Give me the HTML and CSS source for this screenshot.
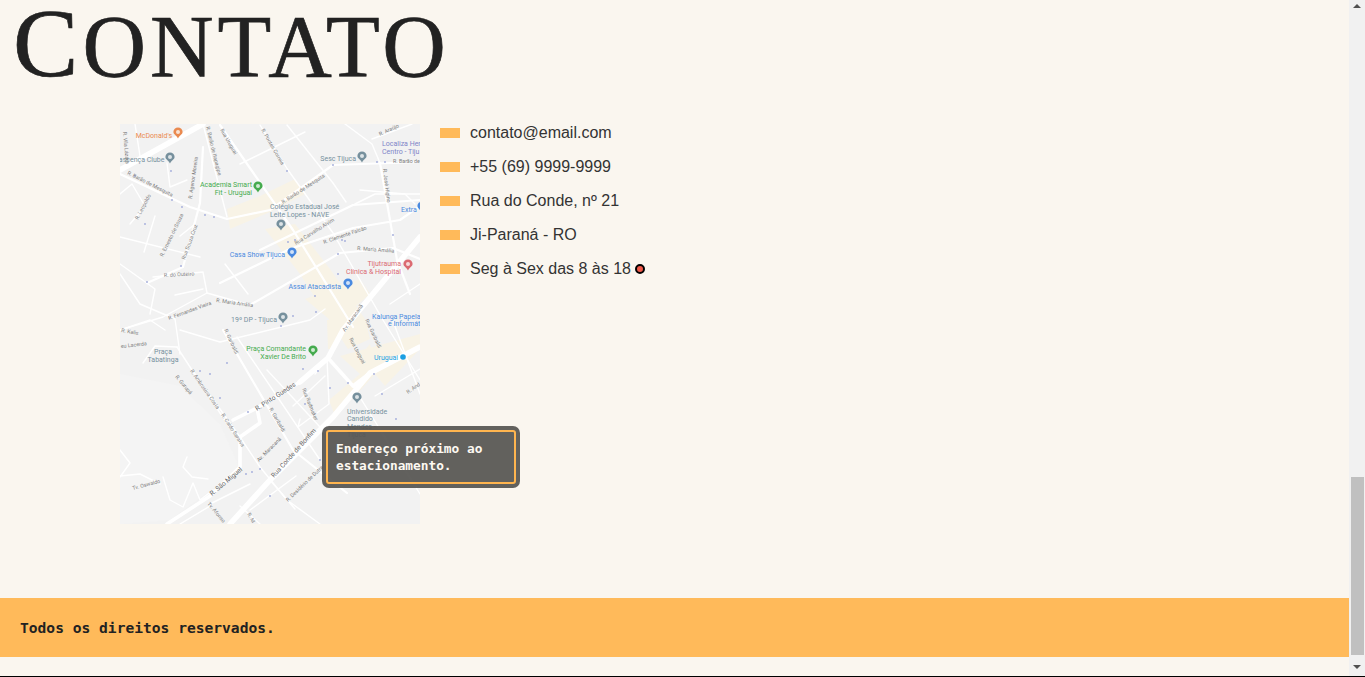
FILE: index.html
```html
<!DOCTYPE html>
<html lang="pt-BR">
<head>
<meta charset="utf-8">
<title>Contato</title>
<link rel="stylesheet" href="styles.css">
</head>
<body>
<div class="window">
  <div class="viewport">
    <div class="page">
      <h1 class="title">Contato</h1>
      <section class="contact">
        <div class="map-wrap">
          <svg class="map" width="300" height="400" viewBox="0 0 300 400" xmlns="http://www.w3.org/2000/svg">
            <defs>
              <g id="pin"><path d="M0-5.5a4.6 4.6 0 0 1 4.6 4.6C4.6 1.6 1.3 2.6 0 5.5-1.3 2.6-4.6 1.6-4.6-.9A4.6 4.6 0 0 1 0-5.5z"/><circle cy="-1" r="2" class="pin-dot"/></g>
            </defs>
            <rect width="300" height="400" class="land"/>
            <path class="hill" d="M0 250 60 262 100 300 120 345 50 396 0 400z"/>
            <path class="beige" d="M107 85 140 72 175 55 185 70 150 88 110 105zM145 105 175 100 210 145 245 195 250 215 228 225 215 205 180 150zM185 175 240 155 250 170 215 200zM207 196H228L215 225 208 225zM220 232 300 210V225L265 262 255 250 235 272 215 292 209 276 240 250zM240 232 250 220 258 250 246 250z"/>
            <g class="r-major">
              <path d="M0 46 83 0"/>
              <path d="M300 113 223 206 208 234 180 258"/>
              <path d="M300 223 250 249 213 293 150 356 110 400"/>
            </g>
            <g class="r-wide">
              <path d="M180 258 137 284 113 296"/>
              <path d="M47 400 90 372 120 343 120 313 140 299 137 284"/>
              <path d="M208 234 233 262 250 249"/>
            </g>
            <g class="r-mid">
              <path d="M0 50 70 83 107 95 150 86 213 41 300 38"/>
              <path d="M100 1 173 106 233 203"/>
              <path d="M140 126 233 81 300 76"/>
              <path d="M100 159 170 125 233 104 280 96 300 82"/>
              <path d="M130 181 220 129 273 124 300 135"/>
              <path d="M83 23 80 79 63 143 27 159"/>
              <path d="M260 39 277 136 290 170"/>
              <path d="M103 206 173 326 227 369"/>
            </g>
            <g class="r-thin">
              <path d="M140 1 168 46 213 109 263 196 300 256"/>
              <path d="M167 1 213 59 226 78"/>
              <path d="M83 0 107 93"/>
              <path d="M0 113 80 133"/>
              <path d="M47 39 50 63 67 56"/>
              <path d="M33 153 83 148 87 169 130 181"/>
              <path d="M0 206 43 193 87 169"/>
              <path d="M55 171 83 165"/>
              <path d="M120 40 185 8"/>
              <path d="M235 80 255 70 300 70"/>
              <path d="M240 66 285 70 295 80"/>
              <path d="M252 15 292 0"/>
              <path d="M225 0 252 20 260 39"/>
              <path d="M72 246 120 313 140 343 167 376 200 400"/>
              <path d="M57 223 100 289 120 319"/>
              <path d="M117 213 200 336"/>
              <path d="M147 246 200 303"/>
              <path d="M60 206 100 218 190 196 205 185"/>
              <path d="M23 239 35 222 57 223"/>
              <path d="M0 206 30 196 45 206"/>
              <path d="M173 282 205 252"/>
              <path d="M195 250 207 234 209 280 178 303 180 295"/>
              <path d="M270 180 300 160"/>
              <path d="M273 197 300 270"/>
              <path d="M255 272 300 245"/>
              <path d="M0 140 35 165 30 190"/>
              <path d="M0 150 20 180 55 195 60 230"/>
              <path d="M233 262 300 370"/>
              <path d="M90 380 130 360"/>
              <path d="M130 386 176 352"/>
              <path d="M0 326 10 339 0 353"/>
              <path d="M43 353 50 376 63 383 73 359 80 376 93 366"/>
              <path d="M67 333 63 343 72 353 88 355"/>
              <path d="M0 352 20 350 40 360"/>
              <path d="M60 400 90 382"/>
              <path d="M150 356 175 385"/>
              <path d="M120 382 140 400"/>
              <path d="M0 70 12 60 25 82 10 100"/>
              <path d="M75 100 60 112"/>
              <path d="M15 0 20 32"/>
              <path d="M35 92 24 128"/>
              <path d="M105 140 128 170"/>
            </g>
            <path class="r-oneway" d="M15 52h0M52 76h0M62 83h0M85 91h0M94 93h0M167 47h0M213 41h0M257 38h0M265 38h0M51 47h0M25 100h0M61 142h0M27 158h0M168 118h0M175 116h0M222 116h0M195 172h0M218 130h0M225 117h0M273 111h0M218 150h0M196 188h0M161 202h0M173 192h0M80 247h0M90 250h0M107 239h0M183 245h0M198 247h0M128 288h0M100 274h0M185 280h0M210 264h0M228 259h0M254 250h0M262 270h0M276 295h0M126 350h0M132 348h0M140 345h0M150 372h0M200 336h0"/>
            <g class="poi">
              <text class="orange" x="52" y="14" text-anchor="end">McDonald's</text>
              <use href="#pin" x="58" y="9" class="orange"/>
              <text class="slate" x="44.5" y="37.5" text-anchor="end">ascença Clube</text>
              <use href="#pin" x="50" y="34" class="slate"/>
              <text class="slate" x="236" y="37" text-anchor="end">Sesc Tijuca</text>
              <use href="#pin" x="242" y="33" class="slate"/>
              <text class="violet" x="262" y="21.5">Localiza Her</text>
              <text class="violet" x="262" y="29.5">Centro - Tiju</text>
              <text class="green" x="132" y="63" text-anchor="end">Academia Smart</text>
              <text class="green" x="132" y="71" text-anchor="end">Fit - Uruguai</text>
              <use href="#pin" x="138" y="63" class="green"/>
              <text class="slate" x="150" y="84.5">Colégio Estadual José</text>
              <text class="slate" x="150" y="92.5">Leite Lopes - NAVE</text>
              <use href="#pin" x="161" y="101" class="slate"/>
              <text class="blue" x="281" y="87.5">Extra</text>
              <use href="#pin" x="302" y="83" class="blue"/>
              <text class="blue" x="165" y="132.5" text-anchor="end">Casa Show Tijuca</text>
              <use href="#pin" x="172" y="129" class="blue"/>
              <text class="rose" x="281" y="141.5" text-anchor="end">Tijutrauma</text>
              <text class="rose" x="281" y="149.5" text-anchor="end">Clínica &amp; Hospital</text>
              <use href="#pin" x="288" y="141" class="rose"/>
              <text class="blue" x="221" y="164.5" text-anchor="end">Assaí Atacadista</text>
              <use href="#pin" x="228" y="160" class="blue"/>
              <text class="slate" x="157" y="197.5" text-anchor="end">19º DP - Tijuca</text>
              <use href="#pin" x="163" y="194" class="slate"/>
              <text class="blue" x="252" y="194.5">Kalunga Papela</text>
              <text class="blue" x="268" y="202">e Informát</text>
              <text class="slate" x="43" y="229.5" text-anchor="middle">Praça</text>
              <text class="slate" x="43" y="237.5" text-anchor="middle">Tabatinga</text>
              <text class="green" x="186" y="226.5" text-anchor="end">Praça Comandante</text>
              <text class="green" x="186" y="234.5" text-anchor="end">Xavier De Brito</text>
              <use href="#pin" x="193" y="227" class="green"/>
              <text class="sky" x="254" y="235.5">Uruguai</text>
              <circle cx="283" cy="233" r="2.8" class="sky"/>
              <use href="#pin" x="237" y="274" class="slate"/>
              <text class="slate" x="227" y="289.5">Universidade</text>
              <text class="slate" x="227" y="297">Candido</text>
              <text class="slate" x="227" y="305">Mendes -</text>
              <text class="slate" x="227" y="313">Tijuca</text>
            </g>
            <g class="street">
              <text transform="translate(7 50) rotate(27)">R. Barão de Mesquita</text>
              <text transform="translate(163 80) rotate(-33)">R. Barão de Mesquita</text>
              <text transform="translate(86 3) rotate(76)">R. Barão de Itapagipe</text>
              <text transform="translate(100 6) rotate(60)">Rua Uruguai</text>
              <text transform="translate(141 6) rotate(60)">R. Pontes Correia</text>
              <text transform="translate(72 75) rotate(-82)">R. Agenor Moreira</text>
              <text transform="translate(3 8) rotate(85)">R. Vila Lázara</text>
              <text transform="translate(18 96) rotate(-62)">R. Leopoldo</text>
              <text transform="translate(43 133) rotate(-64)">R. Ernesto de Souza</text>
              <text transform="translate(65 136) rotate(-70)">Rua Souza Cruz</text>
              <text transform="translate(176 121) rotate(-32)">Rua Carvalho Alvim</text>
              <text transform="translate(204 120) rotate(-19)">R. Clemente Falcão</text>
              <text transform="translate(237 126) rotate(4)">R. Maria Amália</text>
              <text transform="translate(44 153) rotate(-3)">R. do Outeiro</text>
              <text transform="translate(96 178) rotate(8)">R. Maria Amália</text>
              <text transform="translate(49 196) rotate(-20)">R. Fernandes Vieira</text>
              <text transform="translate(273 39)">R. Barão de</text>
              <text transform="translate(263 45) rotate(83)">R. José Higino</text>
              <text transform="translate(260 12) rotate(-25)">R. Araújo</text>
              <text transform="translate(225 208) rotate(-55)">Av. Maracanã</text>
              <text transform="translate(245 196) rotate(65)">Rua Garibaldi</text>
              <text transform="translate(229 215) rotate(62)">Rua Uruguai</text>
              <text transform="translate(104 206) rotate(65)">R. Garibaldi</text>
              <text transform="translate(70 247) rotate(55)">R. Ambrosina Costa</text>
              <text transform="translate(55 253) rotate(50)">R. Gurupá</text>
              <text transform="translate(101 291) rotate(57)">R. Caldo Saraiva</text>
              <text transform="translate(149 285) rotate(60)">R. Garibaldi</text>
              <text transform="translate(182 265) rotate(68)">Rua Radmaker</text>
              <text class="big" transform="translate(137 287) rotate(-33)">R. Pinto Guedes</text>
              <text class="big" transform="translate(154 354) rotate(-48)">Rua Conde de Bonfim</text>
              <text class="big" transform="translate(92 372) rotate(-40)">R. São Miguel</text>
              <text transform="translate(139 338) rotate(-45)">Av. Maracanã</text>
              <text transform="translate(168 378) rotate(-44)">R. Desidério de Dutra</text>
              <text transform="translate(13 366) rotate(-15)">Tv. Oswaldo</text>
              <text transform="translate(87 380) rotate(50)">Tv. Afonso</text>
              <text transform="translate(288 270) rotate(-35)">R. And</text>
              <text transform="translate(1 208) rotate(10)">R. Kalis</text>
              <text transform="translate(1 224) rotate(-6)">eu Lacerda</text>
              <text transform="translate(127 390) rotate(60)">R. M</text>
            </g>
          </svg>
          <div class="tooltip"><p class="tooltip-text">Endereço próximo ao estacionamento.</p></div>
        </div>
        <ul class="info">
          <li class="info-item">contato@email.com</li>
          <li class="info-item">+55 (69) 9999-9999</li>
          <li class="info-item">Rua do Conde, nº 21</li>
          <li class="info-item">Ji-Paraná - RO</li>
          <li class="info-item">Seg à Sex das 8 às 18 <span class="status"></span></li>
        </ul>
      </section>
      <footer class="footer">Todos os direitos reservados.</footer>
    </div>
    <div class="scrollbar">
      <span class="arrow arrow-up"></span>
      <div class="thumb"></div>
      <span class="arrow arrow-down"></span>
    </div>
  </div>
  <div class="edge"></div>
</div>
</body>
</html>
```
FILE: styles.css
```css
* { box-sizing: border-box; }
html, body { margin: 0; height: 100%; overflow: hidden; }
body { background: #faf6ef; color: #222; font-family: "Liberation Sans", Arial, sans-serif; }
.window { display: flex; flex-direction: column; height: 677px; }
.viewport { display: flex; height: 676px; }
.page { width: 1349px; display: flex; flex-direction: column; }
.edge { height: 1px; background: #000; }

.title {
  margin: 0;
  height: 124px;
  padding-left: 13px;
  font: 400 88px/86px "Liberation Serif", "Times New Roman", serif;
  letter-spacing: 4px;
  text-transform: uppercase;
  color: #222;
  -webkit-text-stroke: .7px #222;
}
.title::first-letter { font-size: 98px; }

.contact { display: flex; gap: 20px; padding-left: 120px; height: 400px; }
.map-wrap { position: relative; width: 300px; height: 400px; }
.map { display: block; }
.land { fill: #f2f2f2; }
.hill { fill: #f4f4f4; }
.beige { fill: #f8f3e6; }
.r-major path, .r-wide path, .r-mid path, .r-thin path { fill: none; stroke: #fff; stroke-linejoin: round; stroke-linecap: round; }
.r-major path { stroke-width: 5.5; }
.r-wide path { stroke-width: 3.6; }
.r-mid path { stroke-width: 2.2; }
.r-thin path { stroke-width: 1.4; }
.r-oneway { fill: none; stroke: #a9b2dd; stroke-width: 2; stroke-linecap: round; }
.poi text { font: 7px Roboto, "Liberation Sans", sans-serif; }
.street text { font: 5.3px Roboto, "Liberation Sans", sans-serif; fill: #7d7d7d; }
.street text.big { font-size: 6.6px; fill: #666; }
.pin-dot { fill: #fff; opacity: .75; }
.orange { fill: #ea8a50; }
.slate { fill: #76909d; }
.violet { fill: #7f84c8; }
.green { fill: #45ab4e; }
.blue { fill: #4a8ae0; }
.rose { fill: #db6a72; }
.sky { fill: #1c9fe2; }

.tooltip {
  position: absolute;
  left: 202px;
  top: 302px;
  width: 198px;
  height: 62px;
  padding: 4px;
  border-radius: 7px;
  background: rgba(86, 85, 82, .93);
}
.tooltip-text {
  margin: 0;
  height: 54px;
  padding: 8px 8px;
  border: 2px solid #ffb54f;
  border-radius: 3px;
  font: 700 12.8px/17px "DejaVu Sans Mono", monospace;
  color: #fdf9f2;
}

.info { list-style: none; margin: 0; padding: 0; display: flex; flex-direction: column; gap: 16px; color: #333; }
.info-item { display: flex; align-items: center; gap: 10px; height: 18px; font-size: 16px; line-height: 18px; white-space: pre; }
.info-item::before { content: ""; width: 20px; height: 10px; background: #ffba5a; }
.status { width: 10px; height: 10px; margin-left: -10px; border-radius: 50%; border: 2px solid #000; background: #f15a4a; }

.footer {
  margin-top: 74px;
  height: 59px;
  padding: 2px 0 0 20px;
  display: flex;
  align-items: center;
  background: #ffba5a;
  font: 700 14.6px/1 "DejaVu Sans Mono", monospace;
  color: #222;
}

.scrollbar { width: 16px; background: #f1f1f1; display: flex; flex-direction: column; align-items: center; position: relative; }
.thumb { width: 13px; height: 178px; margin-top: 477px; margin-left: 1px; background: #c0c0c0; }
.arrow { position: absolute; left: 4px; width: 0; height: 0; border-left: 4px solid transparent; border-right: 4px solid transparent; }
.arrow-up { top: 4px; border-bottom: 4px solid #505050; }
.arrow-down { bottom: 7px; border-top: 4px solid #505050; }
```
